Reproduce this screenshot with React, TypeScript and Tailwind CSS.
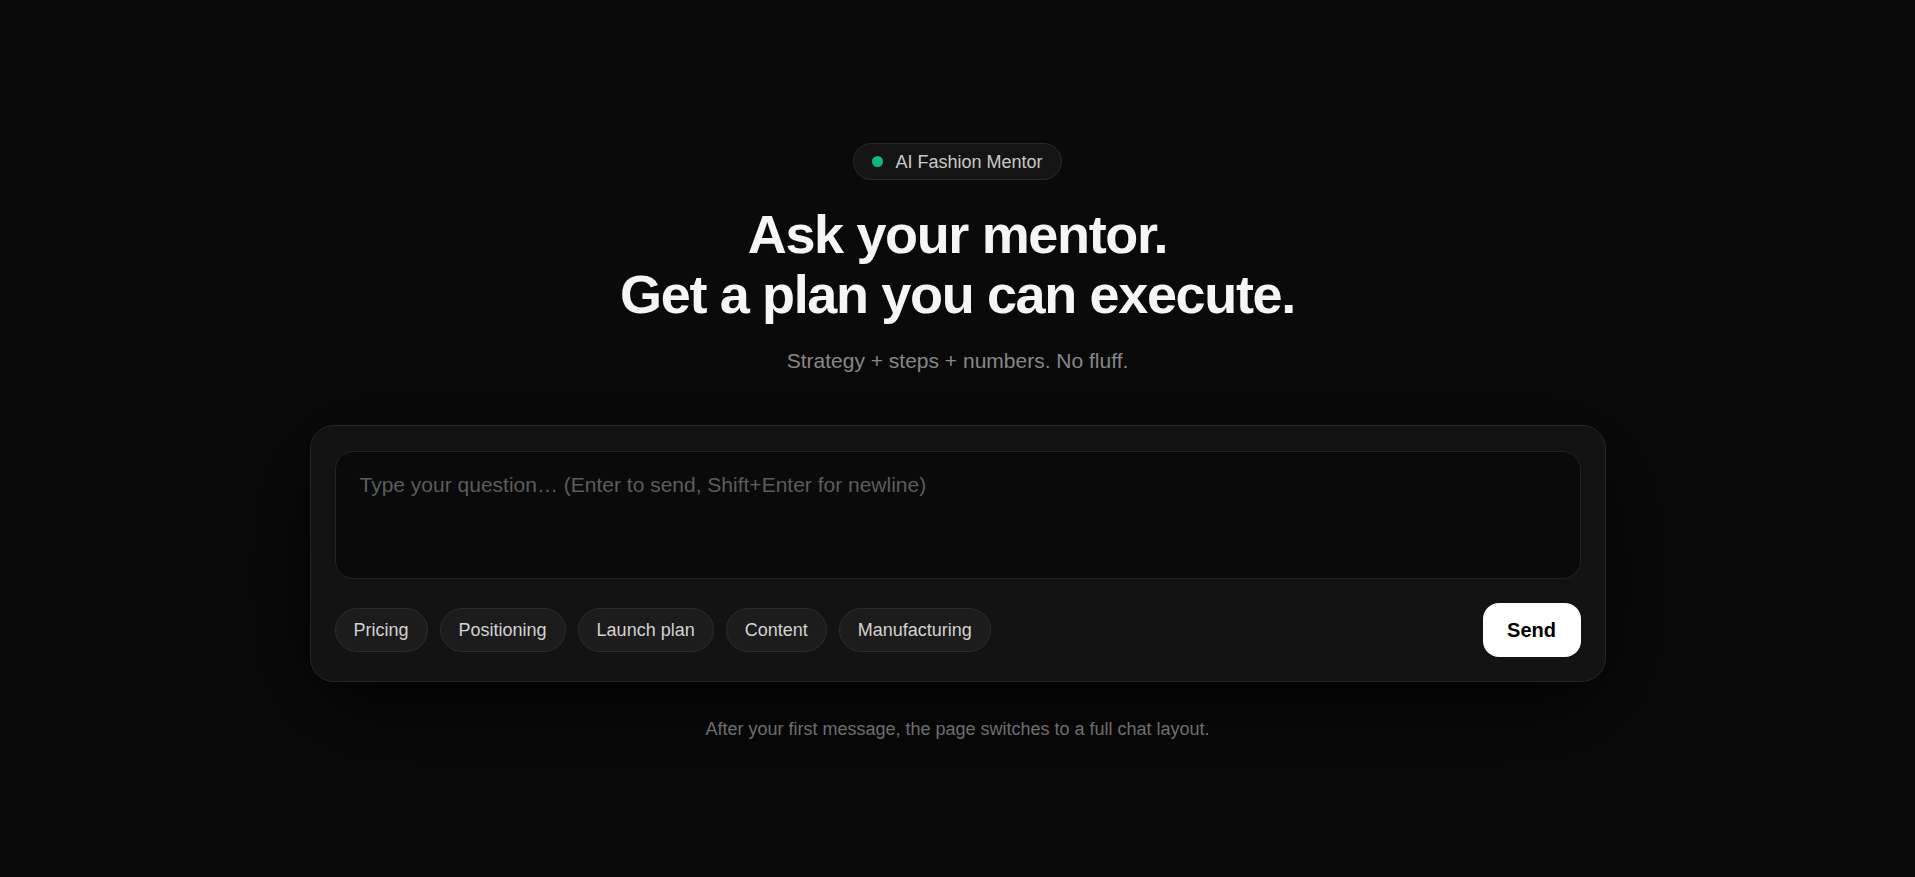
import React from "react";

const chips = ["Pricing", "Positioning", "Launch plan", "Content", "Manufacturing"];

export default function App() {
  return (
    <div className="min-h-screen w-full bg-[#0a0a0a] font-['Liberation_Sans',Arial,sans-serif] text-white">
      <div className="flex flex-col items-center pt-[143px] pb-20">
        <div className="flex h-[37px] items-center gap-3 rounded-full border border-[#2a2a2a] bg-[#141414] pl-[18px] pr-[18px]">
          <span className="h-[11px] w-[11px] rounded-full bg-[#10b981]" />
          <span className="text-[18px] leading-none text-[#c9c9c9]">AI Fashion Mentor</span>
        </div>

        <h1 className="mt-6 text-center text-[54px] font-bold leading-[60px] tracking-[-0.025em] text-[#f5f5f5]">
          Ask your mentor.
          <br />
          Get a plan you can execute.
        </h1>

        <p className="mt-[21px] text-[21px] leading-[32px] text-[#8c8c8c]">
          Strategy + steps + numbers. No fluff.
        </p>

        <div className="mt-[48px] w-[1296px] rounded-[24px] border border-[#262626] bg-[#121212] px-6 pt-[25px] pb-6 shadow-[0_24px_100px_rgba(0,0,0,0.85)]">
          <textarea
            className="block h-[128px] w-full resize-none rounded-[18px] border border-[#242424] bg-[#0a0a0a] px-6 py-[17px] text-[21px] leading-[32px] text-[#e5e5e5] outline-none placeholder:text-[#5c5c5c]"
            placeholder="Type your question… (Enter to send, Shift+Enter for newline)"
          />
          <div className="mt-6 flex items-center justify-between">
            <div className="flex items-center gap-3">
              {chips.map((c) => (
                <button
                  key={c}
                  className="h-[44px] rounded-full border border-[#2c2c2c] bg-[#1c1c1c] px-[18px] text-[18px] leading-none text-[#d2d2d2]"
                >
                  {c}
                </button>
              ))}
            </div>
            <button className="h-[54px] w-[98px] rounded-[16px] bg-white text-[20px] font-bold leading-none text-black">
              Send
            </button>
          </div>
        </div>

        <p className="mt-[34px] text-[18px] leading-[27px] text-[#6e6e6e]">
          After your first message, the page switches to a full chat layout.
        </p>
      </div>
    </div>
  );
}
